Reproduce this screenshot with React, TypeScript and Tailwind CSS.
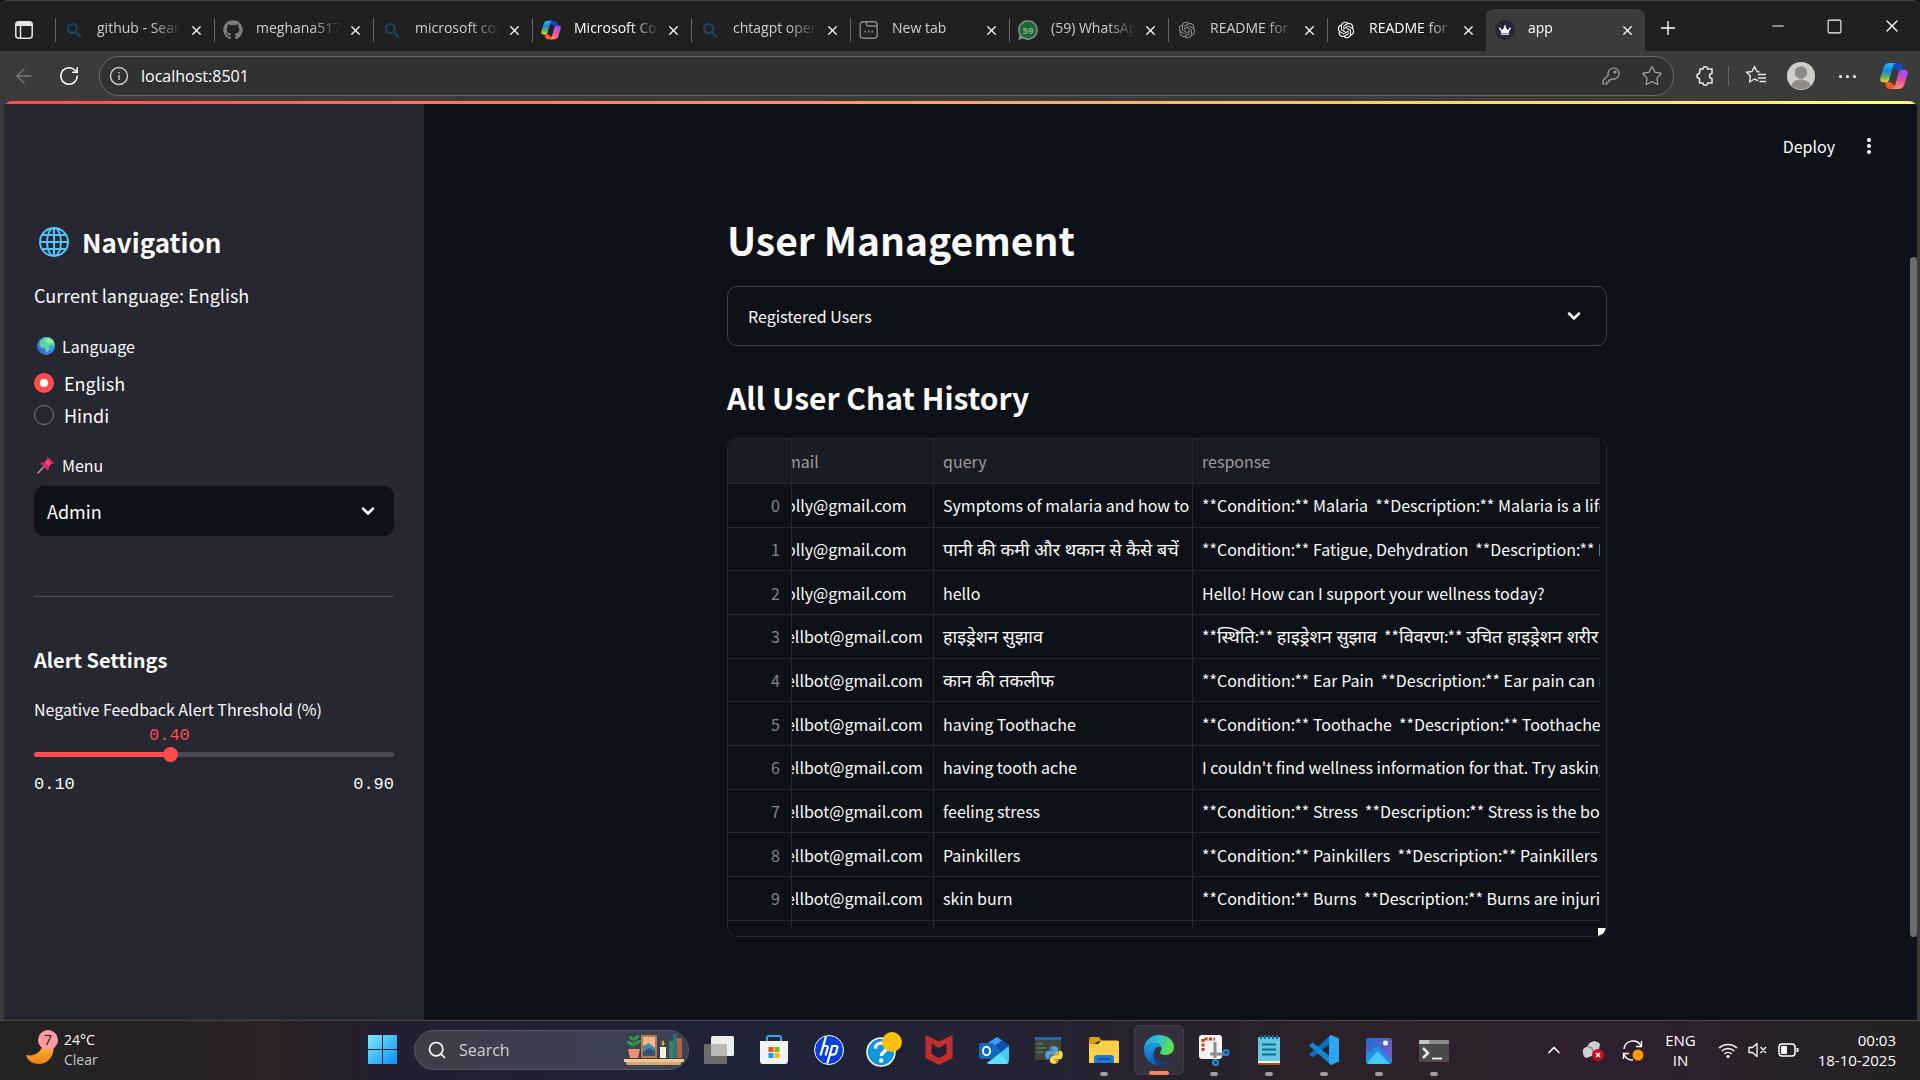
import React, { useState } from "react";
import {
  ArrowLeft,
  ChevronDown,
  ChevronUp,
  Plus,
  RotateCw,
  Search,
  Square,
  Minus,
  Star,
  X,
} from "lucide-react";
import { FaGithub, FaPython, FaCrown } from "react-icons/fa";
import { RiOpenaiFill } from "react-icons/ri";

/* ---------- Small drawings ---------- */

function CopilotLogo({ className }: { className: string }) {
  return (
    <svg viewBox="0 0 28 28" className={className} aria-hidden="true">
      <defs>
        <linearGradient id="cpA" x1="0" y1="0" x2="0" y2="1">
          <stop offset="0" stopColor="#22b8f5" />
          <stop offset=".4" stopColor="#1a86e8" />
          <stop offset=".7" stopColor="#4fb36a" />
          <stop offset="1" stopColor="#f5d327" />
        </linearGradient>
        <linearGradient id="cpB" x1="0.2" y1="0" x2="0" y2="1">
          <stop offset="0" stopColor="#a04df0" />
          <stop offset=".5" stopColor="#f0509a" />
          <stop offset="1" stopColor="#ff9a5a" />
        </linearGradient>
      </defs>
      <path d="M9 1h10c2 0 3 1.200 3.500 2.700L23.500 8h-5L14 6z" fill="#1546c4" />
      <path d="M19 27H9.500c-2 0-2.800-1-3.400-3L5 20h5l4 3z" fill="#f5582e" />
      <path d="M9.500 1H16c-1.800.3-2.600 1.800-3 3.300l-3.600 13c-.5 1.900-1.600 2.900-3.400 2.900H3.200C.7 20.200-.2 18 .5 15.600L4 4.500C4.800 2.200 6.700 1 9.500 1z" fill="url(#cpA)" />
      <path d="M18.500 27H12c1.800-.3 2.600-1.800 3-3.300l3.600-13c.5-1.900 1.600-2.900 3.400-2.900h2.800c2.500 0 3.400 2.200 2.700 4.600L24 23.500c-.8 2.300-2.700 3.500-5.500 3.500z" fill="url(#cpB)" />
    </svg>
  );
}

function BingSearchIcon() {
  return (
    <svg viewBox="0 0 20 20" className="size-5" fill="none" stroke="#1c4466" strokeWidth="2" aria-hidden="true">
      <circle cx="8.500" cy="8.500" r="4.500" />
      <path d="M12 12l4.500 5" strokeLinecap="round" />
    </svg>
  );
}

function NewTabIcon() {
  return (
    <svg viewBox="0 0 20 20" className="size-5" fill="none" stroke="#8a8a8a" strokeWidth="1.400" aria-hidden="true">
      <rect x="1.200" y="1.700" width="17" height="16.600" rx="3" />
      <path d="M7.500 2v2.500q0 1.500 1.500 1.500h9" />
      <path d="M5.500 11.500h1.500M9 11.500h1.500M12.500 11.500H14" strokeWidth="1.800" />
    </svg>
  );
}

function WhatsAppIcon() {
  return (
    <svg viewBox="0 0 20 20" className="size-5" aria-hidden="true">
      <path d="M10 0a10 10 0 0 1 0 20c-2 0-3.200-.4-4.700-1.200L0 20l1.300-5A10 10 0 0 1 10 0z" fill="#7d857f" />
      <circle cx="10" cy="10" r="8.300" fill="#176b2e" />
      <text x="10" y="13.500" fontSize="9.500" fontWeight="700" fill="#8fa596" textAnchor="middle" fontFamily="Open Sans, sans-serif">59</text>
    </svg>
  );
}

function GlobeIcon() {
  return (
    <svg viewBox="0 0 32 32" className="size-8" fill="none" stroke="#53c3fb" strokeWidth="2" aria-hidden="true">
      <circle cx="16" cy="16" r="14" />
      <ellipse cx="16" cy="16" rx="7" ry="14" />
      <path d="M16 2v28M2 16h28M4.500 9h23M4.500 23h23" />
    </svg>
  );
}

function EarthIcon() {
  return (
    <svg viewBox="0 0 18 18" className="size-[18px]" aria-hidden="true">
      <defs>
        <linearGradient id="sea" x1="1" y1="0" x2="0" y2="1">
          <stop offset="0" stopColor="#3fd0f5" />
          <stop offset=".5" stopColor="#2f8ff0" />
          <stop offset="1" stopColor="#5a4fc0" />
        </linearGradient>
      </defs>
      <circle cx="9" cy="9" r="9" fill="url(#sea)" />
      <path d="M3 5c1-2.500 4-4.500 7-4.700 3 0 5.500 1.500 6.800 4l.6 4-1.800 1.500-1.600-1.200-2 .2.700 3-2.300 3.400H9l-.8-4-3.700-.4L2.500 8z" fill="#5fd3a0" />
      <path d="M8 3l4-2 3.500 2L17 6l-4 .6-3-.6z" fill="#8af0a0" />
    </svg>
  );
}

function PinIcon() {
  return (
    <svg viewBox="0 0 18 18" className="size-[18px]" aria-hidden="true">
      <path d="M1 17l6-6.500" stroke="#9c98a6" strokeWidth="1.600" strokeLinecap="round" />
      <path d="M10.500 0.800L17.200 7c-1 1-2 .8-2.800.5L11.800 10.500c.4 1.600 0 3-1 4L3.500 7.500c1-1 2.500-1.300 4-1L10.200 3.500C9.800 2.500 9.800 1.500 10.500.8z" fill="#e0245e" />
      <path d="M10.200 3.500l4.200 4-2.600 3-4.300-4z" fill="#f4457c" />
    </svg>
  );
}

function MoonIcon() {
  return (
    <svg viewBox="0 0 36 40" className="h-10 w-9" aria-hidden="true">
      <defs>
        <linearGradient id="moon" x1="0" y1="0" x2="0" y2="1">
          <stop offset="0" stopColor="#ffc83d" />
          <stop offset="1" stopColor="#f07d1a" />
        </linearGradient>
      </defs>
      <path d="M26 10c5 12-2 24-13 24C6 34 1 30 0 25c9 2 17-4 17-13z" fill="url(#moon)" />
      <circle cx="22" cy="10" r="10" fill="#ff99a4" />
      <text x="22" y="15" fontSize="14" textAnchor="middle" fill="#241a1c" fontFamily="Open Sans, sans-serif">7</text>
    </svg>
  );
}

function ShelfArt() {
  return (
    <svg viewBox="0 0 60 36" className="h-9 w-[60px]" aria-hidden="true">
      <path d="M1 28h58l-3 5H3z" fill="#d9a76a" />
      <path d="M0 27h60v3H0z" fill="#f0c98c" />
      <path d="M4 17h12l-2 9H6z" fill="#ee9277" />
      <path d="M10 17V5M10 14C5 14 3 11 3 9c4 0 7 2 7 5zM10 13c5 0 7-3 7-5-4 0-7 2-7 5zM10 9C7 9 5 6 5 4c3 0 5 2 5 5zM10 8c0-3 2-5 5-5 0 3-2 5-5 5z" fill="#2f9e44" />
      <path d="M10 17V5" stroke="#2f9e44" />
      <rect x="17" y="3" width="16" height="23" fill="#b87a4a" />
      <rect x="19" y="5" width="12" height="19" fill="#f2b48c" />
      <path d="M19 14l6-3 6 5v8H19z" fill="#4f86ad" />
      <path d="M19 20l6-4 6 3v5H19z" fill="#2e5578" />
      <rect x="36" y="15" width="6" height="11" fill="#fdf1dc" />
      <path d="M39 8c2 3 2 5 0 6-2-1-2-3 0-6z" fill="#ff9d2e" />
      <rect x="45" y="9" width="4" height="17" fill="#3f8256" />
      <rect x="49" y="2" width="4" height="24" fill="#2e6e86" />
      <rect x="53" y="6" width="5" height="20" fill="#b8603a" />
    </svg>
  );
}

/* ---------- Taskbar icons ---------- */

const TaskViewIcon = () => (
  <svg viewBox="0 0 30 30" className="size-[30px]" aria-hidden="true">
    <rect x="7" y="1" width="23" height="20" rx="1.500" fill="#ededed" />
    <rect x="0" y="9" width="23" height="20" rx="1.500" fill="#6c6c6c" />
    <rect x="7" y="9" width="16" height="12" fill="#b9b9b9" />
  </svg>
);

const StoreIcon = () => (
  <svg viewBox="0 0 30 30" className="size-[30px]" aria-hidden="true">
    <path d="M8 7V2.500C8 1.500 8.500 1 9.500 1h11c1 0 1.500.5 1.500 1.500V7" fill="none" stroke="#29aee6" strokeWidth="2" />
    <path d="M1 6h28v20a3 3 0 0 1-3 3H4a3 3 0 0 1-3-3z" fill="#f3f3f3" />
    <path d="M9.500 12h5v5h-5z" fill="#f25022" />
    <path d="M15.500 12h5v5h-5z" fill="#7fba00" />
    <path d="M9.500 18h5v5h-5z" fill="#00a4ef" />
    <path d="M15.500 18h5v5h-5z" fill="#ffb900" />
  </svg>
);

const HpIcon = () => (
  <svg viewBox="0 0 30 30" className="size-[30px]" aria-hidden="true">
    <circle cx="15" cy="15" r="14.500" fill="#0a3fd8" stroke="#fff" />
    <path d="M12 1.500L6.500 20.500M9 11h3.300c1.300 0 1.800.7 1.400 2L11.500 20.500" fill="none" stroke="#fff" strokeWidth="2.200" />
    <path d="M13.300 28.500L18.300 11h3.500c1.500 0 2 .8 1.600 2.200L22 17.700c-.4 1.300-1.200 2-2.600 2h-2.800" fill="none" stroke="#fff" strokeWidth="2.200" />
  </svg>
);

const HelpIcon = () => (
  <svg viewBox="0 0 36 36" className="size-9" aria-hidden="true">
    <circle cx="15" cy="20" r="14" fill="#1296db" stroke="#fff" strokeWidth="1.500" />
    <path d="M9.500 16.500c0-7 11-7 11-.8 0 4.300-5.200 4-5.200 8.300" fill="none" stroke="#fff" strokeWidth="3.400" />
    <circle cx="15.200" cy="28.500" r="2.200" fill="#fff" />
    <circle cx="26" cy="10" r="10" fill="#fdc10d" />
  </svg>
);

const McAfeeIcon = () => (
  <svg viewBox="0 0 30 30" className="size-[30px]" aria-hidden="true">
    <path d="M1.500 0L15 6.500 28.500 0v23L15 30 1.500 23zM7.500 8.500V19l7.500 4 7.500-4V8.500L15 13z" fill="#c12f2c" fillRule="evenodd" />
  </svg>
);

const OutlookIcon = () => (
  <svg viewBox="0 0 30 30" className="size-[30px]" aria-hidden="true">
    <path d="M6 10L18 2l12 8v14H6z" fill="#1366c2" />
    <path d="M14 6l4-4 12 8-8 8z" fill="#0f4fa8" />
    <path d="M6 10L18 2l5 3.500L12 13z" fill="#3a9ff0" />
    <path d="M8 28l22-17v14c0 2.500-1 4-3.500 4H10z" fill="#3ccbf4" />
    <path d="M8 28L22 18l7 10c-1 .8-1.500 1-2.500 1H10z" fill="#5fdcf8" />
    <rect x="0" y="8" width="15" height="16" rx="2" fill="#0f6cbd" />
    <ellipse cx="7.500" cy="16" rx="3.600" ry="4.200" fill="none" stroke="#fff" strokeWidth="2" />
  </svg>
);

const PythonIcon = () => (
  <span className="relative block size-[30px]">
    <svg viewBox="0 0 30 30" className="size-[30px]" aria-hidden="true">
      <rect x="1" y="2" width="26" height="23" fill="#3f4441" />
      <rect x="1" y="2" width="26" height="3" fill="#2467a8" />
      <path d="M3 9h6M3 13h9M3 17h6" stroke="#4f8a4a" strokeWidth="1.500" />
      <defs>
        <linearGradient id="py" x1="0" y1="0" x2="1" y2="1">
          <stop offset=".48" stopColor="#5a9fd4" />
          <stop offset=".52" stopColor="#ffd845" />
        </linearGradient>
      </defs>
    </svg>
    <FaPython className="absolute right-0 bottom-0 size-5 fill-[url(#py)]" aria-hidden="true" />
  </span>
);

const FolderIcon = () => (
  <svg viewBox="0 0 30 30" className="size-[30px]" aria-hidden="true">
    <path d="M0 4c0-1.500 1-2 2-2h8l3 4h-3L0 12z" fill="#dc9d08" />
    <path d="M0 9h9l3.500-3.500H28c1.500 0 2 .8 2 2V28H0z" fill="#ffcf48" />
    <path d="M5 28v-5c0-2 1-3 3-3h14c2 0 3 1 3 3v5z" fill="#1a7fd4" />
    <path d="M9 24h12" stroke="#0c4f92" strokeWidth="1.500" />
  </svg>
);

const EdgeIcon = () => (
  <svg viewBox="0 0 30 30" className="size-[30px]" aria-hidden="true">
    <defs>
      <linearGradient id="edA" x1="0" y1="0" x2="1" y2=".3">
        <stop offset="0" stopColor="#1f9fe0" />
        <stop offset=".55" stopColor="#2fc6cf" />
        <stop offset="1" stopColor="#5fe04a" />
      </linearGradient>
      <linearGradient id="edB" x1="0" y1="0" x2="0" y2="1">
        <stop offset="0" stopColor="#1b9de2" />
        <stop offset="1" stopColor="#0d5cb8" />
      </linearGradient>
    </defs>
    <path d="M0 14.500C0 6 6.500 0 15 0s15 5.500 15 12c0 5-4 8-8.500 8-3.500 0-5.500-1.200-5.500-2.200s1.500-1.800 1.500-4.300C17.500 10 14 8 10 8 5 8 1 11 0 14.500z" fill="url(#edA)" />
    <path d="M0 15C.5 11 4.500 8 9.500 8c4 0 7.500 2 8 4.500-3-2-7.500.5-7.500 6C10 25 15 29 21 29c-2 .8-4 1-6 1C6.500 30 0 23.500 0 15z" fill="url(#edB)" />
    <path d="M10 18c0 5.500 4 9 10 9 3.500 0 6.500-1.500 8-3.500-2.500 5-8.500 6.500-12.500 6.500C9 29 7 19 12 13.500c-1.500 1-2 3-2 4.500z" fill="#123f94" />
  </svg>
);

const SnipIcon = () => (
  <svg viewBox="0 0 32 32" className="size-8" aria-hidden="true">
    <rect x="1" y="1" width="23" height="24" rx="3" fill="#f4f4f4" />
    <path d="M5 17V5h12" fill="none" stroke="#d13a12" strokeWidth="3" strokeDasharray="3 1.500" />
    <path d="M17 8v16M12 20h14" stroke="#8d8d8d" strokeWidth="3" />
    <circle cx="28" cy="18.500" r="2.500" fill="none" stroke="#1e8fe0" strokeWidth="2" />
    <circle cx="17.500" cy="28.500" r="2.500" fill="none" stroke="#1e8fe0" strokeWidth="2" />
  </svg>
);

const NotepadIcon = () => (
  <svg viewBox="0 0 30 30" className="size-[30px]" aria-hidden="true">
    <rect x="4" y="2" width="22" height="26" rx="1" fill="#63c8e2" />
    <path d="M4 26h22v2H4z" fill="#f2f2f2" />
    <path d="M4 28h22v2H4z" fill="#a65312" />
    <path d="M7 0v4M11 0v4M15 0v4M19 0v4M23 0v4" stroke="#0e6c8f" strokeWidth="2" />
    <path d="M8 9.500h14M8 14.500h14M8 19.500h14" stroke="#116e93" strokeWidth="2" />
  </svg>
);

const VsCodeIcon = () => (
  <svg viewBox="0 0 30 30" className="size-[30px]" aria-hidden="true">
    <path d="M22 0v8L3.500 22.500 0 19.500z" fill="#0a6fc0" />
    <path d="M22 30v-8L3.500 7.500 0 10.500z" fill="#1788d6" />
    <path d="M22 0l8 3.500v23L22 30l-2-1.500V1.500z" fill="#2aa6f2" />
  </svg>
);

const PhotosIcon = () => (
  <svg viewBox="0 0 30 30" className="size-[30px]" aria-hidden="true">
    <defs>
      <linearGradient id="ph" x1="0" y1="0" x2="1" y2="1">
        <stop offset="0" stopColor="#1e6fd0" />
        <stop offset="1" stopColor="#8a55c8" />
      </linearGradient>
    </defs>
    <rect x="2" y="3" width="26" height="26" rx="3" fill="url(#ph)" />
    <path d="M2 20l9-7.500c1.500-1.200 2.500-1.200 4 0l13 13c0 2-1.300 3.500-3.500 3.500H5c-2 0-3-1.500-3-3z" fill="#1f8fea" />
    <path d="M3 28L13.500 16l12 13H5z" fill="#45c8f8" />
    <circle cx="21.500" cy="8" r="2.500" fill="#fff" />
  </svg>
);

const TerminalIcon = () => (
  <svg viewBox="0 0 30 30" className="size-[30px]" aria-hidden="true">
    <rect x="0" y="5" width="30" height="22" rx="1.500" fill="#4a4a4a" />
    <path d="M0 9V6.500C0 5.500.6 5 1.500 5h27c.9 0 1.500.5 1.500 1.500V9z" fill="#8b8b8b" />
    <path d="M0 9V6.500C0 5.500.6 5 1.500 5H10v4z" fill="#c4c4c4" />
    <path d="M4 13l5 5-5 5" fill="none" stroke="#e8e8e8" strokeWidth="2.500" />
    <path d="M13 23.500h10" stroke="#e8e8e8" strokeWidth="2" />
  </svg>
);

const taskbarApps: { name: string; icon: React.ReactNode; state?: "open" | "active" }[] = [
  { name: "Task View", icon: <TaskViewIcon /> },
  { name: "Microsoft Store", icon: <StoreIcon /> },
  { name: "HP", icon: <HpIcon /> },
  { name: "Get Help", icon: <HelpIcon /> },
  { name: "McAfee", icon: <McAfeeIcon /> },
  { name: "Outlook", icon: <OutlookIcon /> },
  { name: "Python", icon: <PythonIcon /> },
  { name: "File Explorer", icon: <FolderIcon />, state: "open" },
  { name: "Microsoft Edge", icon: <EdgeIcon />, state: "active" },
  { name: "Snipping Tool", icon: <SnipIcon />, state: "open" },
  { name: "Notepad", icon: <NotepadIcon />, state: "open" },
  { name: "Visual Studio Code", icon: <VsCodeIcon />, state: "open" },
  { name: "Photos", icon: <PhotosIcon />, state: "open" },
  { name: "Terminal", icon: <TerminalIcon />, state: "open" },
];

/* ---------- Data ---------- */

const tabs: { title: string; icon: React.ReactNode; bright?: boolean; active?: boolean }[] = [
  { title: "github - Sear", icon: <BingSearchIcon /> },
  { title: "meghana517", icon: <FaGithub className="size-5 text-[#7d7d7d]" /> },
  { title: "microsoft cop", icon: <BingSearchIcon /> },
  { title: "Microsoft Co", icon: <CopilotLogo className="size-5" />, bright: true },
  { title: "chtagpt open", icon: <BingSearchIcon /> },
  { title: "New tab", icon: <NewTabIcon /> },
  { title: "(59) WhatsAp", icon: <WhatsAppIcon /> },
  { title: "README for", icon: <RiOpenaiFill className="size-5 text-[#8a8a8a]" /> },
  { title: "README for", icon: <RiOpenaiFill className="size-5 text-white" />, bright: true },
  {
    title: "app",
    icon: (
      <span className="flex size-5 items-center justify-center rounded-full bg-[#262730]">
        <FaCrown className="size-3 text-white" />
      </span>
    ),
    active: true,
  },
];

const rows: [string, string, string][] = [
  ["olly@gmail.com", "Symptoms of malaria and how to treat", "**Condition:** Malaria  **Description:** Malaria is a life-threatening"],
  ["olly@gmail.com", "पानी की कमी और थकान से कैसे बचें", "**Condition:** Fatigue, Dehydration  **Description:** Fatigue"],
  ["olly@gmail.com", "hello", "Hello! How can I support your wellness today?"],
  ["ellbot@gmail.com", "हाइड्रेशन सुझाव", "**स्थिति:** हाइड्रेशन सुझाव  **विवरण:** उचित हाइड्रेशन शरीर"],
  ["ellbot@gmail.com", "कान की तकलीफ", "**Condition:** Ear Pain  **Description:** Ear pain can result"],
  ["ellbot@gmail.com", "having Toothache", "**Condition:** Toothache  **Description:** Toothache is"],
  ["ellbot@gmail.com", "having tooth ache", "I couldn't find wellness information for that. Try asking about"],
  ["ellbot@gmail.com", "feeling stress", "**Condition:** Stress  **Description:** Stress is the body's"],
  ["ellbot@gmail.com", "Painkillers", "**Condition:** Painkillers  **Description:** Painkillers are"],
  ["ellbot@gmail.com", "skin burn", "**Condition:** Burns  **Description:** Burns are injuries"],
];

/* ---------- Browser chrome ---------- */

function TabStrip() {
  return (
    <header className="flex h-[51px] shrink-0 items-end rounded-t-lg border-t border-[#434343] bg-[#202020]">
      <button aria-label="Tab actions" className="flex h-[42px] w-[55px] shrink-0 items-center pl-[15px]">
        <svg viewBox="0 0 18 18" className="size-[18px]" fill="none" stroke="#e6e6e6" strokeWidth="1.500" aria-hidden="true">
          <rect x=".8" y=".8" width="16.400" height="16.400" rx="3" />
          <path d="M1 3h16" strokeWidth="4" />
          <path d="M5.500 4v13" />
        </svg>
      </button>
      {tabs.map((t, i) => (
        <div
          key={i}
          className={
            t.active
              ? "flex h-[42px] w-[159px] items-center rounded-t-lg bg-[#3b3b3b] pr-2"
              : "flex h-[42px] w-[159px] items-center pr-2"
          }
        >
          <span className={t.active ? "h-6 w-px" : "h-6 w-px bg-[#636363]"} />
          <button className="flex min-w-0 flex-1 items-center pl-2 text-left">
            <span className="w-5 shrink-0">{t.icon}</span>
            <span
              className={
                t.bright || t.active
                  ? "ml-[13px] flex-1 overflow-hidden pb-1 text-[14px] leading-5 whitespace-nowrap text-white [mask-image:linear-gradient(to_right,black_65%,transparent)]"
                  : "ml-[13px] flex-1 overflow-hidden pb-1 text-[14px] leading-5 whitespace-nowrap text-[#cfcfcf] [mask-image:linear-gradient(to_right,black_65%,transparent)]"
              }
            >
              {t.title}
            </span>
          </button>
          <button aria-label={"Close " + t.title} className="ml-1 flex size-5 items-center justify-center text-white">
            <X className="size-[15px]" strokeWidth={2} />
          </button>
        </div>
      ))}
      <button aria-label="New tab" className="flex h-[42px] w-[46px] items-center justify-center pb-1 text-white">
        <Plus className="size-[22px]" strokeWidth={1.5} />
      </button>
      <div className="ml-auto flex h-[50px] text-white">
        <button aria-label="Minimize" className="flex w-[57px] items-center justify-center">
          <Minus className="size-[18px]" strokeWidth={1.3} />
        </button>
        <button aria-label="Maximize" className="flex w-[57px] items-center justify-center">
          <Square className="size-[17px]" strokeWidth={1.5} />
        </button>
        <button aria-label="Close window" className="flex w-[57px] items-center justify-center">
          <X className="size-5" strokeWidth={1.5} />
        </button>
      </div>
    </header>
  );
}

function Toolbar() {
  return (
    <nav className="flex h-[50px] shrink-0 items-center bg-[#3b3b3b] pr-3 pl-3 text-[#e8e8e8]">
      <button aria-label="Back" className="flex size-6 items-center justify-center text-[#7b7b7b]">
        <ArrowLeft className="size-6" strokeWidth={1.3} />
      </button>
      <button aria-label="Refresh" className="ml-[21px] flex size-6 items-center justify-center text-white">
        <RotateCw className="size-[22px]" strokeWidth={1.7} />
      </button>
      <div className="ml-[18px] flex h-10 flex-1 items-center rounded-full border border-[#6b6b6b] bg-[#313131] pr-[10px] pl-[9px]">
        <svg viewBox="0 0 20 20" className="size-5 shrink-0" fill="none" stroke="#cfcfcf" strokeWidth="1.400" aria-hidden="true">
          <circle cx="10" cy="10" r="8.500" />
          <path d="M10 9v5M10 6v1.500" />
        </svg>
        <input
          aria-label="Address"
          defaultValue="localhost:8501"
          className="ml-3 min-w-0 flex-1 bg-transparent text-[16px] text-white outline-none"
        />
        <button aria-label="Passwords" className="text-[#a8a8a8]">
          <svg viewBox="0 0 20 20" className="size-5" fill="none" stroke="currentColor" strokeWidth="1.200" aria-hidden="true">
            <path d="M12.500 2a5.500 5.500 0 1 1-1.700 10.700L9.500 14H8v2H6v2H2v-3.500l5.300-5.300A5.500 5.500 0 0 1 12.500 2z" />
            <circle cx="14" cy="6" r="1" />
          </svg>
        </button>
        <button aria-label="Add to favorites" className="ml-5 text-[#a8a8a8]">
          <Star className="size-[22px]" strokeWidth={1.3} />
        </button>
      </div>
      <button aria-label="Extensions" className="ml-5">
        <svg viewBox="0 0 22 22" className="size-[22px]" fill="none" stroke="currentColor" strokeWidth="1.500" strokeLinejoin="round" aria-hidden="true">
          <path d="M6 4h3a2.300 2.300 0 0 1 4.600 0H18v4.500a2.500 2.500 0 1 0 0 5V18h-4.400a2.300 2.300 0 0 1-4.600 0H5.500v-4.500a2.500 2.500 0 0 1 0-5z" />
        </svg>
      </button>
      <span className="mr-4 ml-3 h-5 w-px bg-[#636363]" />
      <button aria-label="Favorites">
        <svg viewBox="0 0 22 22" className="size-[22px]" fill="none" stroke="currentColor" strokeWidth="1.400" strokeLinejoin="round" strokeLinecap="round" aria-hidden="true">
          <path d="M12.500 15.500L9.500 14l-5 3 .9-6L1.500 7.300 7 6.500 9.500 1.500 12 6.500l2 .4" />
          <path d="M13.500 9.500h7M13.500 13h7M15 16.500h5.500" />
        </svg>
      </button>
      <button aria-label="Profile" className="ml-5">
        <svg viewBox="0 0 28 28" className="size-7" aria-hidden="true">
          <circle cx="14" cy="14" r="14" fill="#d0cecb" />
          <circle cx="14" cy="10.500" r="6.200" fill="#8e8a86" />
          <path d="M4.500 23.500c2-8 17-8 19 0A14 14 0 0 1 4.500 23.500z" fill="#8e8a86" />
        </svg>
      </button>
      <button aria-label="Settings and more" className="ml-5 flex gap-1 px-1">
        <span className="size-[3px] rounded-full bg-white" />
        <span className="size-[3px] rounded-full bg-white" />
        <span className="size-[3px] rounded-full bg-white" />
      </button>
      <button aria-label="Copilot" className="ml-5">
        <CopilotLogo className="size-7" />
      </button>
    </nav>
  );
}

/* ---------- Page ---------- */

function Sidebar() {
  const [lang, setLang] = useState("English");
  const [threshold, setThreshold] = useState(0.4);
  const pct = ((threshold - 0.1) / 0.8) * 100;
  return (
    <aside className="w-[420px] shrink-0 bg-[#262730] px-[30px]">
      <h2 className="mt-[120px] flex items-center gap-3 pl-1 text-[26px] leading-9 font-semibold">
        <GlobeIcon />
        Navigation
      </h2>
      <p className="mt-5 text-[18px] leading-[30px]">Current language: {lang}</p>
      <fieldset className="mt-6">
        <legend className="flex items-center gap-[7px] pl-[3px] text-[16px] leading-6">
          <EarthIcon />
          Language
        </legend>
        <div className="mt-[9px]">
          {["English", "Hindi"].map((l) => (
            <label key={l} className="flex h-8 items-center gap-[10px] text-[18px]">
              <input
                type="radio"
                name="language"
                checked={lang === l}
                onChange={() => setLang(l)}
                className="size-5 appearance-none rounded-full border border-[#7c7d84] checked:border-[6px] checked:border-[#ff4b4b] checked:bg-white"
              />
              {l}
            </label>
          ))}
        </div>
      </fieldset>
      <label htmlFor="menu" className="mt-[22px] flex items-center gap-[7px] pl-[3px] text-[16px] leading-6">
        <PinIcon />
        Menu
      </label>
      <div className="relative mt-[9px]">
        <select
          id="menu"
          defaultValue="Admin"
          className="h-[50px] w-full appearance-none rounded-[10px] bg-[#0e1117] px-[13px] text-[18px] text-[#fafafa]"
        >
          <option>Admin</option>
        </select>
        <ChevronDown className="pointer-events-none absolute top-[15px] right-4 size-5" strokeWidth={3} />
      </div>
      <hr className="mt-[60px] border-[#4c4d54]" />
      <h3 className="mt-12 text-[20px] leading-[30px] font-semibold">Alert Settings</h3>
      <label htmlFor="threshold" className="mt-[22px] block text-[16px] leading-6">
        Negative Feedback Alert Threshold (%)
      </label>
      <div className="mt-[3px] flex flex-col font-[Liberation_Mono,monospace] text-[17px]">
        <div className="flex leading-6" style={{ paddingLeft: `${pct}%` }}>
          <output htmlFor="threshold" className="-ml-5 text-[#ff4b4b]">
            {threshold.toFixed(2)}
          </output>
        </div>
        <input
          id="threshold"
          type="range"
          min={0.1}
          max={0.9}
          step={0.01}
          value={threshold}
          onChange={(e) => setThreshold(Number(e.target.value))}
          style={{ background: `linear-gradient(to right, #ff4b4b ${pct}%, #484a54 ${pct}%)` }}
          className="mt-1 h-[5px] w-full appearance-none rounded-full [&::-webkit-slider-thumb]:size-[15px] [&::-webkit-slider-thumb]:appearance-none [&::-webkit-slider-thumb]:rounded-full [&::-webkit-slider-thumb]:bg-[#ff4b4b]"
        />
        <div className="mt-4 flex justify-between leading-6">
          <span>0.10</span>
          <span>0.90</span>
        </div>
      </div>
    </aside>
  );
}

/* Devanagari runs are set larger so that they weigh the same as the Latin text beside them. */
function CellText({ text }: { text: string }) {
  const parts = text.split(/([\u0900-\u097F]+(?: [\u0900-\u097F]+)*)/);
  return (
    <>
      {parts.map((p, i) =>
        i % 2 === 1 ? (
          <span key={i} lang="hi" className="font-[Noto_Sans,sans-serif] text-[18px] leading-6">
            {p}
          </span>
        ) : (
          p
        ),
      )}
    </>
  );
}

function HistoryTable() {
  const cell = "overflow-hidden border-r border-b border-[#25272c] whitespace-pre";
  return (
    <div className="relative mt-5 overflow-hidden rounded-[10px] border border-[#25272c] pr-[6px] pb-[7px]">
      <table className="h-[490px] w-full table-fixed border-separate border-spacing-0 text-left text-[16px] leading-6">
        <colgroup>
          <col className="w-[64px]" />
          <col className="w-[142px]" />
          <col className="w-[259px]" />
          <col />
        </colgroup>
        <thead className="bg-[#1a1c24] text-[#9a9b9f]">
          <tr className="h-[45px]">
            <th className={cell} aria-label="index" />
            <th className={cell + " font-normal"}>
              <span className="-ml-[6px]">mail</span>
            </th>
            <th className={cell + " px-[9px] font-normal"}>query</th>
            <th className="overflow-hidden border-b border-[#25272c] px-[9px] font-normal">response</th>
          </tr>
        </thead>
        <tbody>
          {rows.map(([email, query, response], i) => (
            <tr key={i} className="h-[43px]">
              <td className={cell + " pr-[11px] text-right text-[#83858a]"}>{i}</td>
              <td className={cell}>
                <span className="-ml-[6px]">{email}</span>
              </td>
              <td className={cell + " pl-[9px]"}>
                <CellText text={query} />
              </td>
              <td className="overflow-hidden border-b border-[#25272c] pl-[9px] whitespace-pre">
                <CellText text={response} />
              </td>
            </tr>
          ))}
          <tr className="h-2">
            <td className="border-r border-[#25272c]" />
            <td className="border-r border-[#25272c]" />
            <td className="border-r border-[#25272c]" />
            <td />
          </tr>
        </tbody>
      </table>
      <svg viewBox="0 0 8 8" className="absolute right-0 bottom-0 size-2" aria-hidden="true">
        <path d="M0 0h8L6 5 1 8H0z" fill="#fff" />
      </svg>
    </div>
  );
}

function MainPanel() {
  return (
    <main className="min-w-0 flex-1">
      <div className="flex h-[84px] items-center justify-end gap-[26px] pr-[33px]">
        <button className="text-[16px]">Deploy</button>
        <button aria-label="Main menu" className="flex w-4 flex-col items-center gap-[2px]">
          <span className="size-1 rounded-full bg-white" />
          <span className="size-1 rounded-full bg-white" />
          <span className="size-1 rounded-full bg-white" />
        </button>
      </div>
      <div className="mx-auto max-w-[880px]">
        <h1 className="mt-6 text-[39px] leading-[54px] font-semibold">User Management</h1>
        <button className="mt-5 flex h-[60px] w-full items-center justify-between rounded-[10px] border border-[#3d3f45] pr-[22px] pl-5 text-[16px]">
          Registered Users
          <ChevronDown className="size-5" strokeWidth={3} />
        </button>
        <h2 className="mt-[30px] text-[30px] leading-[42px] font-semibold">All User Chat History</h2>
        <HistoryTable />
      </div>
    </main>
  );
}

/* ---------- Taskbar ---------- */

function Taskbar() {
  return (
    <footer className="flex h-[60px] shrink-0 items-center border-t border-[#48484c] bg-[linear-gradient(to_right,#232323,#2b2126_14%,#241f30_20%,#1e2338_38%,#232233_52%,#2b2128_70%,#2e1f2f_85%,#232222)] pb-[2px] text-[14px] leading-5 text-white">
      <div className="flex w-[355px] items-center pl-[26px]">
        <MoonIcon />
        <div className="ml-[2px]">
          <p>24°C</p>
          <p className="text-[#c9c9c9]">Clear</p>
        </div>
      </div>
      <button aria-label="Start" className="flex w-[59px] pl-[13px]">
        <svg viewBox="0 0 29 29" className="size-[29px]" aria-hidden="true">
          <defs>
            <linearGradient id="win" x1="0" y1="0" x2="29" y2="29" gradientUnits="userSpaceOnUse">
              <stop offset="0" stopColor="#7ce9fd" />
              <stop offset="1" stopColor="#0a8ff5" />
            </linearGradient>
          </defs>
          <path d="M0 0h14v14H0zM15 0h14v14H15zM0 15h14v14H0zM15 15h14v14H15z" fill="url(#win)" />
        </svg>
      </button>
      <div className="mr-[2px] flex h-10 w-[275px] items-center rounded-full border border-[#55565f] bg-[linear-gradient(to_right,#403c48,#3a4258)] pr-1 pl-3">
        <Search className="size-5 text-white" strokeWidth={2} />
        <input
          aria-label="Search"
          placeholder="Search"
          className="ml-3 w-0 min-w-0 flex-1 bg-transparent text-[16px] text-white outline-none placeholder:text-[#cfcfd4]"
        />
        <ShelfArt />
      </div>
      <div className="flex">
        {taskbarApps.map((a) => (
          <button key={a.name} aria-label={a.name} className="flex h-[58px] w-[55px] items-center justify-center">
            <span
              className={
                a.state === "active"
                  ? "relative flex h-[50px] w-[50px] items-center justify-center rounded-md border border-[#403c48] bg-[#35313c]"
                  : "relative flex h-[50px] w-[50px] items-center justify-center"
              }
            >
              {a.icon}
              {a.state === "open" && <span className="absolute -bottom-px h-1 w-2 rounded-full bg-[#a09ca3]" />}
              {a.state === "active" && <span className="absolute -bottom-px h-1 w-5 rounded-full bg-[#f3825f]" />}
            </span>
          </button>
        ))}
      </div>
      <div className="ml-auto flex items-center pr-6">
        <button aria-label="Show hidden icons" className="mr-[18px]">
          <ChevronUp className="size-5" strokeWidth={2} />
        </button>
        <svg viewBox="0 0 22 24" className="mr-[18px] h-6 w-[22px]" aria-hidden="true">
          <path d="M1 15c-1-4 2-6 4-6C7 3 14 1 18 6l-2 10-12 4C2 19 1 17 1 15z" fill="#cfcfcf" />
          <path d="M6 9c3 0 5 2 5 5" stroke="#8a8a8a" strokeWidth="1.500" fill="none" />
          <circle cx="16" cy="17" r="6" fill="#c50f1f" />
          <path d="M14 15l4 4M18 15l-4 4" stroke="#fff" strokeWidth="1.500" />
        </svg>
        <svg viewBox="0 0 22 24" className="mr-[21px] h-6 w-[22px]" fill="none" stroke="#fff" strokeWidth="1.400" aria-hidden="true">
          <path d="M2 11a9 9 0 0 1 17-3M19.500 3v5.500H14M1.500 21v-5.500H7M2 16a9 9 0 0 0 9 6" />
          <circle cx="16" cy="17" r="5.500" fill="#ff9800" stroke="none" />
        </svg>
        <div className="mr-[22px] text-center text-[15px]">
          <p>ENG</p>
          <p>IN</p>
        </div>
        <svg viewBox="0 0 20 18" className="mr-[10px] h-[18px] w-5" fill="none" stroke="#fff" strokeWidth="1.500" aria-hidden="true">
          <path d="M1 7a13 13 0 0 1 18 0M3.800 10a9 9 0 0 1 12.400 0M6.500 13a5 5 0 0 1 7 0" />
          <circle cx="10" cy="15.500" r="1.600" fill="#fff" stroke="none" />
        </svg>
        <svg viewBox="0 0 20 16" className="mr-[10px] h-4 w-5" fill="none" stroke="#fff" strokeWidth="1.300" strokeLinejoin="round" aria-hidden="true">
          <path d="M1 5.500h3.500L9 1.500v13l-4.500-4H1zM12.500 5l5.500 6M18 5l-5.500 6" />
        </svg>
        <svg viewBox="0 0 21 14" className="mr-[19px] h-[14px] w-[21px]" fill="none" stroke="#fff" strokeWidth="1.500" aria-hidden="true">
          <rect x="1" y="1" width="16" height="12" rx="3" />
          <path d="M19.500 5v4" strokeWidth="2" />
          <rect x="3" y="3" width="6" height="8" rx="1" fill="#fff" stroke="none" />
        </svg>
        <div className="text-right text-[15px]">
          <p>00:03</p>
          <p>18-10-2025</p>
        </div>
      </div>
    </footer>
  );
}

export default function App() {
  return (
    <div className="flex h-screen flex-col overflow-hidden bg-[#1b1b1b] font-[Open_Sans,sans-serif]">
      <TabStrip />
      <Toolbar />
      <div className="min-h-0 flex-1 bg-[#3b3b3b] pr-[3px] pl-1">
        <div className="flex h-full flex-col overflow-hidden rounded-t-lg bg-[#0e1117] font-[Noto_Sans_CJK_SC,Noto_Sans,sans-serif] text-[#fafafa]">
          <div className="h-[3px] shrink-0 bg-[linear-gradient(to_right,#ff4b4b,#fffd80)]" />
          <div className="flex min-h-0 flex-1">
            <Sidebar />
            <MainPanel />
            <div className="w-[7px] shrink-0 pt-[153px]">
              <div className="h-[680px] rounded-full bg-[#6b6c70]" />
            </div>
          </div>
        </div>
      </div>
      <Taskbar />
    </div>
  );
}
